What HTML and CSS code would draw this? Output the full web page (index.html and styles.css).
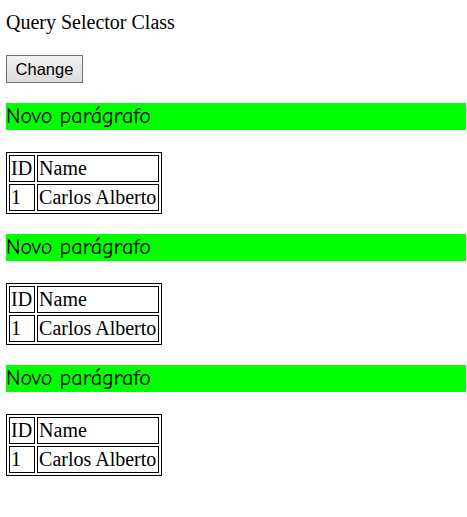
FILE: index.html
```html
<!DOCTYPE html>
<html>
<head>
<meta charset="utf-8">
<link rel="stylesheet" href="styles.css">
</head>
<body>
<p class="title">Query Selector Class</p>
<button class="btn">Change</button>
<p class="novo">Novo parágrafo</p>
<table class="tbl">
<tr><td>ID</td><td>Name</td></tr>
<tr><td>1</td><td>Carlos Alberto</td></tr>
</table>
<p class="novo">Novo parágrafo</p>
<table class="tbl">
<tr><td>ID</td><td>Name</td></tr>
<tr><td>1</td><td>Carlos Alberto</td></tr>
</table>
<p class="novo">Novo parágrafo</p>
<table class="tbl">
<tr><td>ID</td><td>Name</td></tr>
<tr><td>1</td><td>Carlos Alberto</td></tr>
</table>
</body>
</html>
```
FILE: styles.css
```css
html, body {
  background: #fff;
}
body {
  margin: 0;
  padding: 11px 1px 0 6px;
  font-family: "Liberation Serif", "Times New Roman", serif;
  font-size: 20px;
  color: #000;
}
.title {
  margin: 0 0 21px;
  line-height: 23px;
}
.btn {
  display: block;
  margin: 0 0 20px;
  width: 77px;
  height: 28px;
  padding: 0;
  font-family: "Liberation Sans", Arial, sans-serif;
  font-size: 16.5px;
  color: #000;
  background: linear-gradient(#f2f2f2, #dcdcdc);
  border: 1px solid #707070;
  border-radius: 0;
}
.novo {
  margin: 0 0 22px;
  height: 27px;
  line-height: 27px;
  background: #00ff00;
  font-family: "Comic Sans MS", "Comic Neue", "DejaVu Sans", sans-serif;
  font-size: 22px;
}
.tbl {
  border: 1px solid #000;
  border-spacing: 2px;
  margin: 0 0 20px;
}
.tbl td {
  border: 1px solid #000;
  padding: 1px 2px 1px 1px;
  line-height: 23px;
}
```
